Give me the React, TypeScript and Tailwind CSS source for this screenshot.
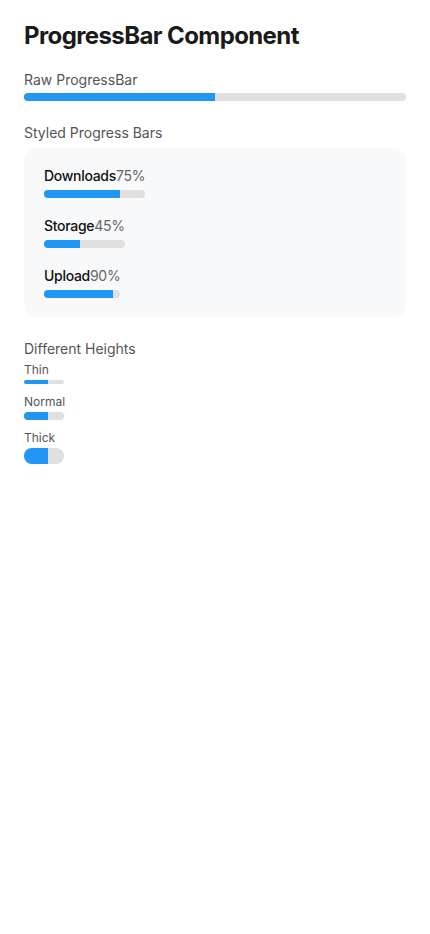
import React from 'react';

type BarProps = {
  value: number;
  className?: string;
  height?: string;
};

const ProgressBar = ({ value, className = 'w-full', height = 'h-2' }: BarProps) => {
  return (
    <div className={`${className} ${height} overflow-hidden rounded-full bg-[#e0e0e0]`}>
      <div className="h-full bg-[#2196f3]" style={{ width: `${value}%` }} />
    </div>
  );
};

const styledBars = [
  { label: 'Downloads', value: 75 },
  { label: 'Storage', value: 45 },
  { label: 'Upload', value: 90 },
];

const heights = [
  { label: 'Thin', height: 'h-1' },
  { label: 'Normal', height: 'h-2' },
  { label: 'Thick', height: 'h-4' },
];

const App = () => {
  return (
    <div className="min-h-screen bg-white px-6 pt-6 font-['Inter',sans-serif] text-[#1a1a1a]">
      <h1 className="mb-[22px] text-2xl font-bold leading-none tracking-tight">ProgressBar Component</h1>

      <section className="mb-[22px]">
        <p className="mb-[3px] text-sm leading-5 text-[#555]">Raw ProgressBar</p>
        <ProgressBar value={50} />
      </section>

      <section className="mb-[22px]">
        <p className="mb-[5px] text-sm leading-5 text-[#555]">Styled Progress Bars</p>
        <div className="flex flex-col items-start gap-[18px] rounded-xl bg-[#f8f9fa] px-5 pt-[18px] pb-[19px]">
          {styledBars.map((bar) => (
            <div key={bar.label} className="flex flex-col">
              <div className="mb-1 text-sm leading-5 tracking-[-0.3px]">
                <span className="font-medium text-[#111]">{bar.label}</span>
                <span className="text-[#666]">{bar.value}%</span>
              </div>
              <ProgressBar value={bar.value} />
            </div>
          ))}
        </div>
      </section>

      <section>
        <p className="mb-[3px] text-sm leading-5 text-[#555]">Different Heights</p>
        {heights.map((h) => (
          <div key={h.label} className="mb-2.5">
            <p className="mb-0.5 text-xs leading-4 text-[#555]">{h.label}</p>
            <ProgressBar value={60} className="w-10" height={h.height} />
          </div>
        ))}
      </section>
    </div>
  );
};

export default App;
